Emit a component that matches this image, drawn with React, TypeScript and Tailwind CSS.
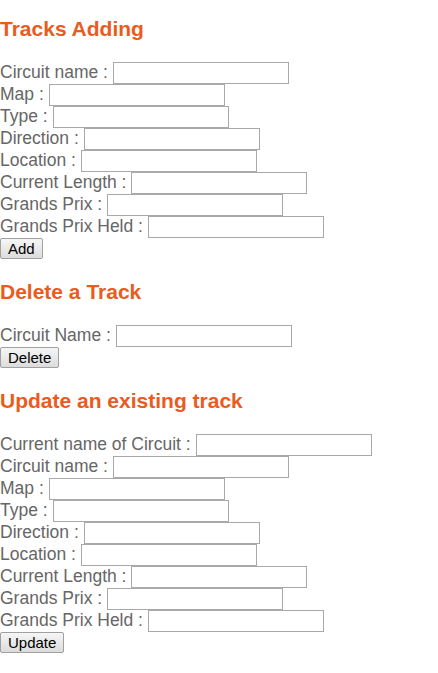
import React from "react";

const addFields = [
  "Circuit name",
  "Map",
  "Type",
  "Direction",
  "Location",
  "Current Length",
  "Grands Prix",
  "Grands Prix Held",
];

function Field({ label }: { label: string }) {
  return (
    <div className="flex h-[22px] items-center whitespace-pre">
      <span className="mb-[2px]">{label} : </span>
      <input
        type="text"
        className="h-[22px] w-[176px] border border-[#a9a9a9] bg-white px-[2px] outline-none"
      />
    </div>
  );
}

function Button({ label }: { label: string }) {
  return (
    <div className="flex h-[22px] items-start">
      <button className="h-[21px] rounded-[2px] border border-[#a0a0a0] bg-gradient-to-b from-[#f6f6f6] to-[#dcdcdc] px-[7px] text-[15px] leading-none text-black">
        {label}
      </button>
    </div>
  );
}

function Heading({ children, first }: { children: React.ReactNode; first?: boolean }) {
  return (
    <h3
      className={
        (first ? "mt-[18px] " : "mt-[21px] ") +
        "mb-[22px] h-[22px] text-[21px] font-bold leading-[22px] text-[#ea5b20]"
      }
    >
      {children}
    </h3>
  );
}

export default function App() {
  return (
    <div
      className="min-h-[673px] bg-white text-[17.5px] text-[#666666]"
      style={{ fontFamily: '"Liberation Sans", Arial, sans-serif' }}
    >
      <div className="pt-px -mt-px">
        <Heading first>Tracks Adding</Heading>
        {addFields.map((f) => (
          <Field key={f} label={f} />
        ))}
        <Button label="Add" />

        <Heading>Delete a Track</Heading>
        <Field label="Circuit Name" />
        <Button label="Delete" />

        <Heading>Update an existing track</Heading>
        <Field label="Current name of Circuit" />
        {addFields.map((f) => (
          <Field key={"u" + f} label={f} />
        ))}
        <Button label="Update" />
      </div>
    </div>
  );
}
